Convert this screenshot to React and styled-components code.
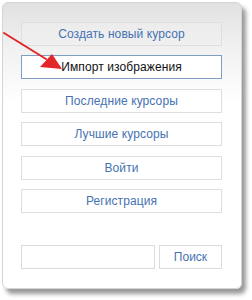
import React from "react";
import styled, { createGlobalStyle } from "styled-components";

const Global = createGlobalStyle`
  html, body { margin: 0; padding: 0; background: #ffffff; }
  body { font-family: "Liberation Sans", Arial, sans-serif; }
`;

const Stage = styled.div`
  position: relative;
  width: 252px;
  height: 300px;
  padding: 2px;
  box-sizing: border-box;
`;

const Panel = styled.div`
  width: 240px;
  height: 287px;
  box-sizing: border-box;
  border: 1px solid #d4d4d4;
  border-radius: 6px;
  background: linear-gradient(to bottom, #e1e1e1 0px, #f1f1f1 45px, #ffffff 100px, #ffffff 100%);
  box-shadow: 4px 5px 4px rgba(0, 0, 0, 0.4);
  padding: 19px 19px 19px 18px;
  display: flex;
  flex-direction: column;
`;

const Menu = styled.div`
  display: flex;
  flex-direction: column;
  gap: 9.4px;
`;

const MenuButton = styled.div`
  height: 24px;
  box-sizing: border-box;
  border: 1px solid ${(p) => (p.$active ? "#7f9ec4" : "#dedede")};
  background: ${(p) => (p.$active ? "#ffffff" : p.$first ? "rgba(240,240,240,0.5)" : "#ffffff")};
  color: ${(p) => (p.$active ? "#111111" : "#4572b2")};
  font-size: 12px;
  display: flex;
  align-items: center;
  justify-content: center;
  letter-spacing: 0.1px;
`;

const SearchRow = styled.div`
  margin-top: auto;
  display: flex;
  gap: 4px;
  height: 24px;
`;

const SearchInput = styled.div`
  width: 134px;
  box-sizing: border-box;
  border: 1px solid #dcdcdc;
  background: #ffffff;
`;

const SearchButton = styled.div`
  flex: 1;
  box-sizing: border-box;
  border: 1px solid #dcdcdc;
  background: #ffffff;
  color: #4572b2;
  font-size: 12px;
  display: flex;
  align-items: center;
  justify-content: center;
`;

const Arrow = styled.svg`
  position: absolute;
  left: 0;
  top: 0;
  pointer-events: none;
`;

const items = [
  "Создать новый курсор",
  "Импорт изображения",
  "Последние курсоры",
  "Лучшие курсоры",
  "Войти",
  "Регистрация",
];

export default function App() {
  return (
    <>
      <Global />
      <Stage>
        <Panel>
          <Menu>
            {items.map((t, i) => (
              <MenuButton key={t} $first={i === 0} $active={i === 1}>
                {t}
              </MenuButton>
            ))}
          </Menu>
          <SearchRow>
            <SearchInput />
            <SearchButton>Поиск</SearchButton>
          </SearchRow>
        </Panel>
        <Arrow width="80" height="80" viewBox="0 0 80 80">
          <line x1="4" y1="33" x2="46" y2="59" stroke="#e3262a" strokeWidth="2" strokeLinecap="round" />
          <polygon points="40,67 52,54 62,69" fill="#e3262a" />
        </Arrow>
      </Stage>
    </>
  );
}
